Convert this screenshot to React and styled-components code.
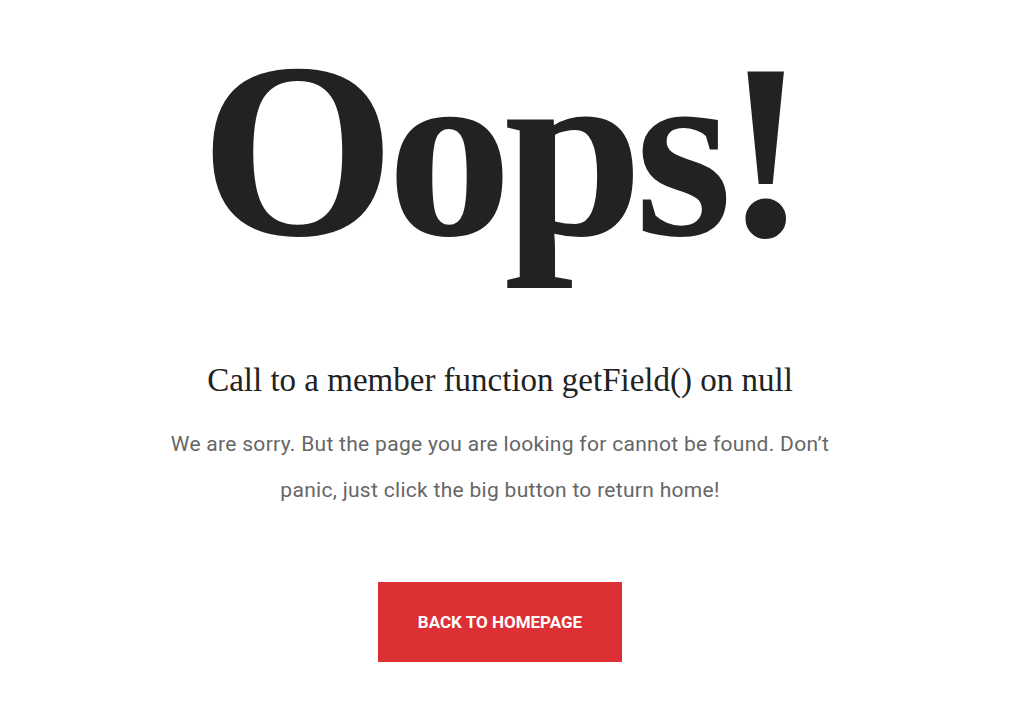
import React from "react";
import styled, { createGlobalStyle } from "styled-components";

const Global = createGlobalStyle`
  html, body { margin: 0; padding: 0; background: #ffffff; }
  body { font-family: Roboto, "Noto Sans", sans-serif; }
`;

const Page = styled.main`
  width: 1000px;
  display: flex;
  flex-direction: column;
  align-items: center;
  padding-top: 3px;
`;

const Title = styled.h1`
  margin: 0;
  font-family: "Liberation Serif", "Times New Roman", serif;
  font-weight: 700;
  font-size: 250px;
  line-height: 296px;
  letter-spacing: -8px;
  color: #222222;
`;

const Subtitle = styled.h2`
  margin: 61px 0 0;
  font-family: "Liberation Serif", "Times New Roman", serif;
  font-weight: 400;
  font-size: 33px;
  line-height: 40px;
  color: #222222;
`;

const Message = styled.p`
  margin: 21px 0 0;
  width: 680px;
  text-align: center;
  font-family: Roboto, "Noto Sans", sans-serif;
  font-size: 21px;
  letter-spacing: 0.3px;
  line-height: 46px;
  color: #666666;
`;

const HomeButton = styled.a`
  margin-top: 69px;
  width: 244px;
  height: 80px;
  display: flex;
  align-items: center;
  justify-content: center;
  background: #dc3035;
  color: #ffffff;
  font-family: Roboto, "Noto Sans", sans-serif;
  font-weight: 700;
  font-size: 17px;
  text-transform: uppercase;
  text-decoration: none;
`;

export default function App() {
  return (
    <>
      <Global />
      <Page>
        <Title>Oops!</Title>
        <Subtitle>Call to a member function getField() on null</Subtitle>
        <Message>
          We are sorry. But the page you are looking for cannot be found. Don’t
          panic, just click the big button to return home!
        </Message>
        <HomeButton href="#">Back to homepage</HomeButton>
      </Page>
    </>
  );
}
